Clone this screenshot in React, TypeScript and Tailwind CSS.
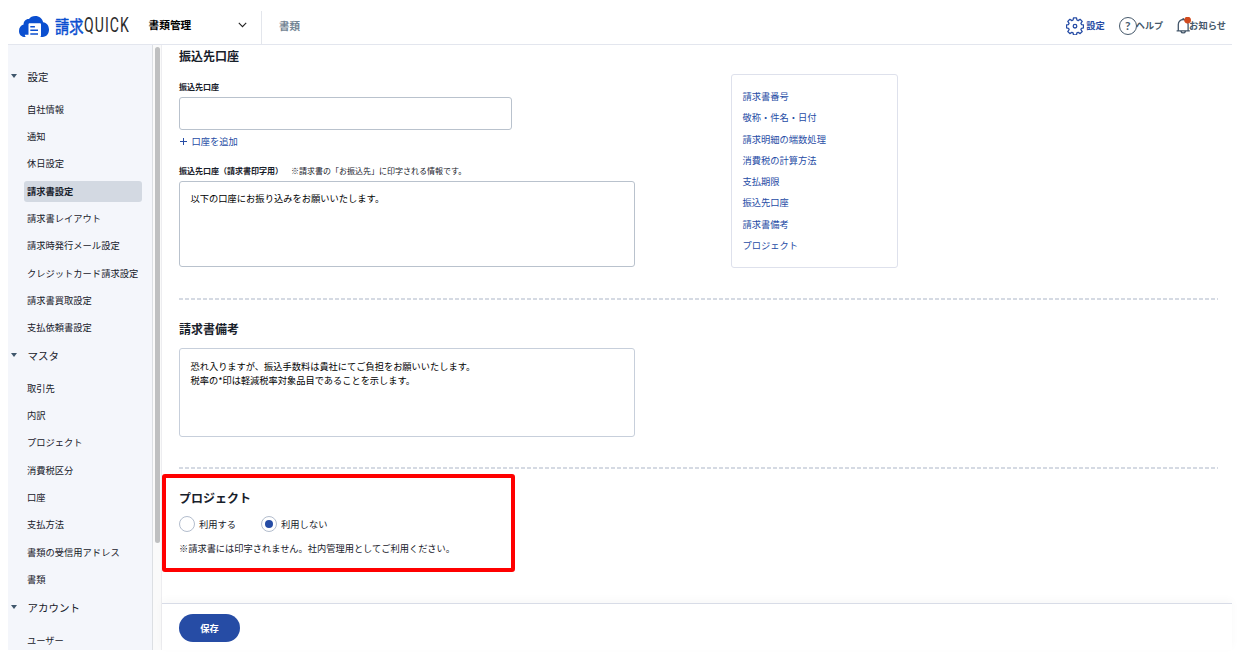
import React from "react";

const groups = [
  {
    title: "設定",
    items: [
      "自社情報",
      "通知",
      "休日設定",
      "請求書設定",
      "請求書レイアウト",
      "請求時発行メール設定",
      "クレジットカード請求設定",
      "請求書買取設定",
      "支払依頼書設定",
    ],
  },
  {
    title: "マスタ",
    items: ["取引先", "内訳", "プロジェクト", "消費税区分", "口座", "支払方法", "書類の受信用アドレス", "書類"],
  },
  { title: "アカウント", items: ["ユーザー"] },
];

const anchors = [
  "請求書番号",
  "敬称・件名・日付",
  "請求明細の端数処理",
  "消費税の計算方法",
  "支払期限",
  "振込先口座",
  "請求書備考",
  "プロジェクト",
];

function Logo() {
  return (
    <div className="ml-[9px] flex w-[116px] shrink-0 items-center" aria-label="請求QUICK">
      <svg width="34" height="28" viewBox="0 0 34 28" className="shrink-0">
        <path
          d="M8.500 25C4.300 25 2 22.500 2 18.900c0-3.200 2-5.500 4.600-6.300C6.300 9.300 8.800 6.700 12 6.900c1.300-1.900 3.500-3 6.200-3 4.100 0 7.300 2.500 7.900 6.400C29.600 10.600 32 13.700 32 17.600 32 22 29.600 25 25.500 25z"
          fill="#0b4fd0"
        />
        <path
          d="M9.600 25.100c-1 0-1.700-.6-1.700-1.500v-.9h3.600V12.600c0-.8.5-1.300 1.300-1.300h9.900c.8 0 1.300.5 1.300 1.300v10.800c0 1.100-.6 1.700-1.600 1.700z"
          fill="#fff"
        />
        <path d="M13.300 14.800h4.600M13.300 18.300h7.700M13.300 22h7.700" stroke="#0b4fd0" strokeWidth="1.600" />
      </svg>
      <span className="ml-[4px] w-[28px] text-[17px] leading-[28px] text-[#0b4fd0]">
        <span className="inline-block origin-left scale-x-[0.84] [-webkit-text-stroke:0.500px_#0b4fd0]">請求</span>
      </span>
      <span className="ml-[1px] w-[46px] font-[Roboto] text-[19.500px] leading-[28px] text-[#2b2b2b]">
        <span className="inline-block origin-left scale-x-[0.720] tracking-[1.500px]">QUICK</span>
      </span>
    </div>
  );
}

function GearIcon() {
  return (
    <svg width="18" height="18" viewBox="0 0 18 18" fill="none" stroke="#264ca5" strokeWidth="1.300" strokeLinejoin="round">
      <path d="M7.500.8h3l.4 2.200 1.300.6 1.900-1.300 2.100 2.100-1.300 1.900.6 1.300 2 .3v3l-2 .4-.6 1.300 1.300 1.900-2.100 2.100-1.900-1.300-1.300.6-.4 2h-3l-.4-2-1.300-.6-1.900 1.300-2.100-2.100 1.300-1.900-.6-1.300-2-.4v-3l2-.3.6-1.300-1.300-1.900 2.100-2.100 1.900 1.300L7.100 3z" />
      <circle cx="9" cy="9.200" r="1.800" />
    </svg>
  );
}

function HelpIcon() {
  return (
    <span className="flex size-[18px] shrink-0 items-center justify-center rounded-full border border-[#46596b] pt-px font-[Lato] text-[12px] font-bold leading-none text-[#4a5d70]">
      ?
    </span>
  );
}

function BellIcon() {
  return (
    <svg width="17" height="18" viewBox="0 0 17 18" fill="none" stroke="#44576a" strokeWidth="1.300" className="shrink-0">
      <path d="M.6 13.800h13.200M2.300 13.600V7.400a4.900 4.900 0 0 1 9.800 0v6.200M7.200 1v1.500M4.900 14.200a2.400 2.400 0 0 0 4.600 0" />
      <circle cx="11.600" cy="3.100" r="3.400" fill="#d14a1d" stroke="none" />
    </svg>
  );
}

function Sidebar() {
  return (
    <nav className="w-[145px] shrink-0 overflow-hidden border-r border-[#dcdfe3] bg-[#f4f6fb] pt-[17.300px]">
      {groups.map((group) => (
        <section key={group.title}>
          <h2 className="flex h-[33px] items-center pb-[3px] pl-[3px] text-[10.500px] font-normal">
            <span className="mb-[3px] mr-[10.500px] h-0 w-0 border-x-[3px] border-t-[4px] border-x-transparent border-t-[#3f566b]" />
            {group.title}
          </h2>
          <ul>
            {group.items.map((item) => (
              <li key={item} className="flex h-[27.350px] items-center pl-4">
                <a
                  className={
                    item === "請求書設定"
                      ? "flex h-[21px] w-[117.500px] items-center rounded-[3px] bg-[#d3d9e2] pb-[0.600px] pl-[3px] font-bold"
                      : "flex h-[21px] items-center pb-[0.600px] pl-[3px]"
                  }
                >
                  {item}
                </a>
              </li>
            ))}
          </ul>
        </section>
      ))}
    </nav>
  );
}

function Radio({ label, checked = false }: { label: string; checked?: boolean }) {
  return (
    <label className="flex items-center gap-1">
      <span className="flex size-4 items-center justify-center rounded-full border border-[#b3bdcd]">
        {checked && <span className="size-2 rounded-full bg-[#264ca5]" />}
      </span>
      {label}
    </label>
  );
}

export default function App() {
  return (
    <div className="flex h-[657px] w-[1237px] flex-col overflow-hidden whitespace-nowrap bg-white pb-[7px] pl-2 pr-[5px] font-['Noto_Sans_CJK_JP',sans-serif] text-[9.270px] leading-[14px] text-[#17202a]">
      <header className="flex h-[45px] shrink-0 items-center border-b border-[#e3e6ee] pt-[7px]">
        <Logo />
        <button className="ml-[15.500px] flex w-[98.500px] items-center justify-between pb-px text-[10.700px] font-bold text-black">
          書類管理
          <svg width="9" height="6" viewBox="0 0 9 6" fill="none" stroke="#222" strokeWidth="1.100">
            <path d="M.8.8 4.500 4.600 8.200.8" />
          </svg>
        </button>
        <div className="ml-[14px] mt-[4px] flex h-[33px] items-center border-l border-[#e3e6ec] pb-[3px] pl-[17px] text-[10.500px] font-bold text-[#738594]">
          書類
        </div>
        <div className="ml-auto mr-[6px] flex items-center font-bold text-[#44576a]">
          <div className="flex items-center gap-[2px] text-[#264ca5]">
            <GearIcon />
            <span className="pb-[2px]">設定</span>
          </div>
          <div className="ml-[14px] flex items-center text-[9.100px]">
            <HelpIcon />
            <span className="-ml-px pb-[2px]">ヘルプ</span>
          </div>
          <div className="ml-[13px] flex items-center">
            <BellIcon />
            <span className="-ml-[4px] pb-[2px]">お知らせ</span>
          </div>
        </div>
      </header>

      <div className="flex min-h-0 flex-1">
        <Sidebar />
        <div className="flex w-[9px] shrink-0 justify-center border-r border-[#ededf0] bg-[#fafafa] pt-[2px]">
          <div className="h-[496px] w-[5px] rounded-full bg-[#bfc0c1]" />
        </div>

        <main className="relative flex min-w-0 flex-1 flex-col">
          <div className="h-[558px] shrink-0 pl-[17px] pr-[14px] pt-[2px]">
            <section className="flex h-[251px]">
              <div className="w-[552px] shrink-0">
                <h1 className="h-[18px] text-[12px] font-bold leading-[18px]">振込先口座</h1>
                <h3 className="mt-[15px] h-[14px] text-[8px] font-bold">振込先口座</h3>
                <div className="mt-[3px] h-[33px] w-[333px] rounded-[3px] border border-[#b9c2cd]" />
                <a className="mt-[4px] flex h-[14px] items-center gap-[3.500px] text-[#264ca5]">
                  <svg width="9" height="9" viewBox="0 0 9 9" stroke="#264ca5" strokeWidth="1">
                    <path d="M1 4.500h7M4.500 1v7" />
                  </svg>
                  口座を追加
                </a>
                <div className="mt-[16px] flex h-[14px] text-[8px]">
                  <h3 className="w-[112px] font-bold">振込先口座（請求書印字用）</h3>
                  <span>※請求書の「お振込先」に印字される情報です。</span>
                </div>
                <div className="mt-[3px] h-[86px] w-[456px] rounded-[3px] border border-[#b9c2cd] px-[10.500px] pt-[9px] text-black">
                  以下の口座にお振り込みをお願いいたします。
                </div>
              </div>
              <aside className="mt-[27px] flex h-[194px] w-[167px] flex-col rounded-[3px] border border-[#dee1ec] pl-[10.500px] pt-[11px] text-[#264ca5]">
                {anchors.map((anchor) => (
                  <a key={anchor} className="h-[21.250px] leading-[21.250px]">
                    {anchor}
                  </a>
                ))}
              </aside>
            </section>
            <div className="h-[2px] bg-[repeating-linear-gradient(90deg,#d5dae3_0_4px,transparent_4px_6px)]" />
            <section className="h-[167px] pt-[20px]">
              <h1 className="h-[18px] text-[12px] font-bold leading-[18px]">請求書備考</h1>
              <div className="mt-[10px] h-[89px] w-[456px] rounded-[3px] border border-[#c7cfdb] px-[10.500px] pt-[10px] text-[9.230px] text-black">
                恐れ入りますが、振込手数料は貴社にてご負担をお願いいたします。
                <br />
                税率の*印は軽減税率対象品目であることを示します。
              </div>
            </section>
            <div className="h-[2px] bg-[repeating-linear-gradient(90deg,#d5dae3_0_4px,transparent_4px_6px)]" />
            <section className="pt-[20px]">
              <h1 className="h-[18px] text-[12px] font-bold leading-[18px]">プロジェクト</h1>
              <div className="mt-[9px] flex h-4 items-center gap-[25px]">
                <Radio label="利用する" />
                <Radio label="利用しない" checked />
              </div>
              <p className="mt-[9px] text-[9.230px]">※請求書には印字されません。社内管理用としてご利用ください。</p>
            </section>
          </div>
          <footer className="flex flex-1 items-center border-t border-[#d8dce7] pl-[17px] pt-[2px] shadow-[0_-3px_8px_rgba(0,0,0,0.03)]">
            <button className="h-[28px] w-[61px] rounded-full bg-[#264ca5] pb-px font-bold text-white">保存</button>
          </footer>
          <div className="absolute left-0 top-[429px] h-[98px] w-[353px] rounded-[3px] border-4 border-[#ff0000]" />
        </main>
      </div>
    </div>
  );
}
